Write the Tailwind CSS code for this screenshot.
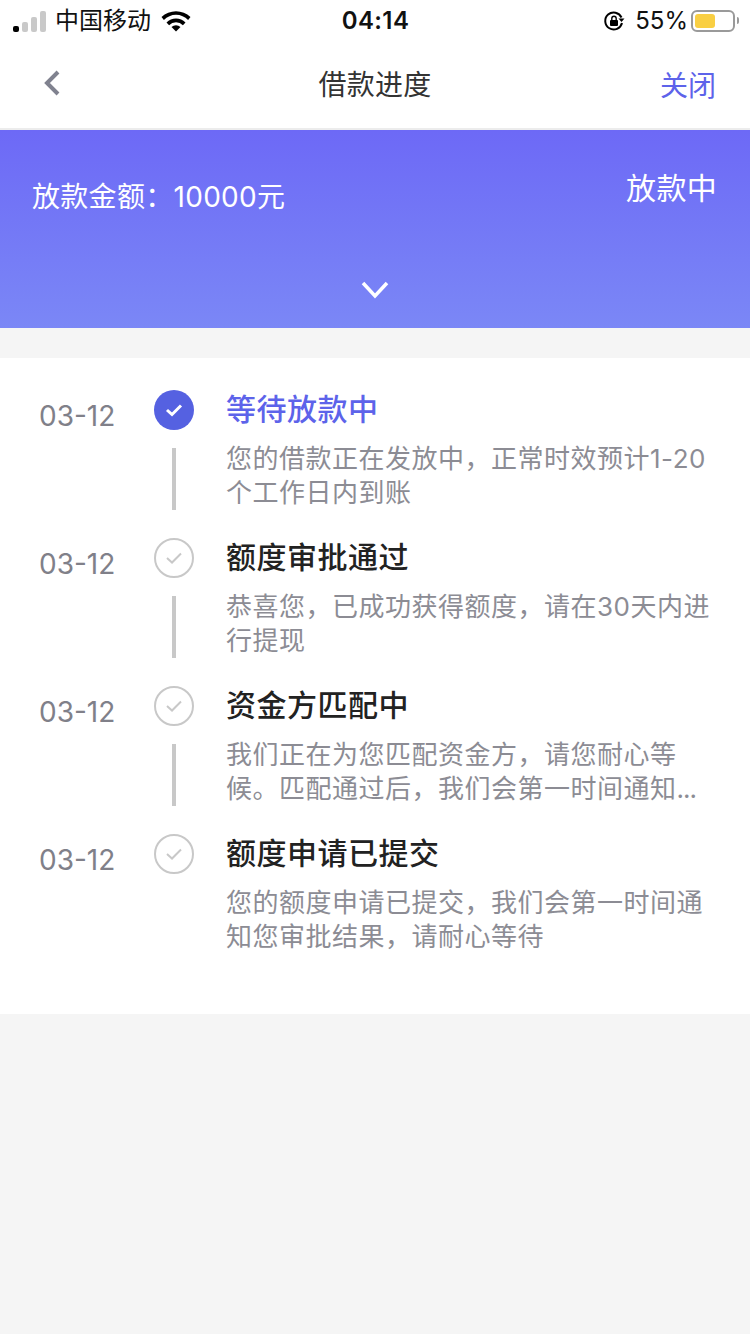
<!DOCTYPE html>
<html>
<head>
    <meta charset="utf-8">
    <title>借款进度</title>
    <script src="https://cdn.jsdelivr.net/npm/@tailwindcss/browser@4"></script>
</head>
<body class="w-[750px] h-[1334px] overflow-hidden bg-[#f5f5f5] font-['Inter','Noto_Sans_CJK_SC',sans-serif]">
    <!-- status bar -->
    <div class="h-[40px] pt-[1px] bg-white relative flex items-center pl-[13px] pr-[11px] text-[#111]">
        <div class="flex items-end gap-[3px] h-[22px] w-[33px]">
            <span class="w-[6px] h-[6px] rounded-[2px] bg-black"></span>
            <span class="w-[6px] h-[10px] rounded-[2px] bg-[#c9c9c9]"></span>
            <span class="w-[6px] h-[15px] rounded-[2px] bg-[#c9c9c9]"></span>
            <span class="w-[6px] h-[21px] rounded-[2px] bg-[#c9c9c9]"></span>
        </div>
        <span class="ml-[9px] text-[24px] leading-[40px]">中国移动</span>
        <svg class="ml-[10px]" width="30" height="22" viewBox="0 0 30 22">
            <path d="M0.500 7a21 21 0 0 1 29 0l-2.400 2.900a17 17 0 0 0-24.200 0z" fill="#000"/>
            <path d="M5.500 12.500a13.500 13.500 0 0 1 19 0l-2.600 2.800a9.500 9.500 0 0 0-13.800 0z" fill="#000"/>
            <path d="M10.500 17a6.500 6.500 0 0 1 9 0l-4.500 4.500z" fill="#000"/>
        </svg>
        <span class="absolute left-[1px] right-0 text-center text-[24px] font-semibold leading-[40px] tracking-[0.4px]">04:14</span>
        <div class="ml-auto flex items-center relative">
            <svg width="22" height="22" viewBox="0 0 22 22">
                <path d="M18.500 7.500A8.500 8.500 0 1 0 19 13" fill="none" stroke="#000" stroke-width="2"/>
                <path d="M15.500 8.500h6l-3 3.500z" fill="#000"/>
                <rect x="7" y="10" width="8" height="6" rx="1" fill="#000"/>
                <path d="M8.800 10V8.500a2.200 2.200 0 0 1 4.400 0V10" fill="none" stroke="#000" stroke-width="1.400"/>
            </svg>
            <span class="ml-[10px] text-[24px] leading-[40px]">55%</span>
            <div class="ml-[3px] w-[44px] h-[22px] rounded-[6px] border-2 border-[#9a9a9a] p-[2px]">
                <div class="w-[20px] h-full rounded-[3px] bg-[#f9cf43]"></div>
            </div>
            <span class="ml-[2px] w-[2px] h-[7px] rounded-r bg-[#9a9a9a]"></span>
        </div>
    </div>

    <!-- nav -->
    <div class="h-[88px] bg-white relative flex items-center justify-between pl-[43px] pr-[34px] border-b-2 border-[#ececec] box-content">
        <svg class="relative -top-[1px]" width="18" height="26" viewBox="0 0 18 26">
            <path d="M15 2 L4 13 L15 24" fill="none" stroke="#80828f" stroke-width="4"/>
        </svg>
        <span class="absolute left-0 right-0 top-[1px] text-center text-[28px] leading-[88px] tracking-[0.3px] text-[#333]">借款进度</span>
        <span class="text-[28px] leading-[88px] text-[#5d63ea] relative top-[2px]">关闭</span>
    </div>

    <!-- summary banner -->
    <div class="h-[198px] bg-gradient-to-b from-[#6d69f6] to-[#7b87f6] text-white relative px-[32px]">
        <div class="flex justify-between">
            <span class="text-[28px] leading-[40px] mt-[47px] font-normal tracking-[0.3px]">放款金额：10000元</span>
            <span class="text-[30px] leading-[40px] mt-[38px] font-normal tracking-[0.3px] pr-[1px]">放款中</span>
        </div>
        <svg class="absolute left-[361px] top-[151px]" width="28" height="18" viewBox="0 0 28 18">
            <path d="M2 2 L14 15 L26 2" fill="none" stroke="#fff" stroke-width="3.500"/>
        </svg>
    </div>

    <!-- timeline -->
    <div class="mt-[30px] bg-white h-[656px] pt-[32px] pl-[39px]">
        <div class="grid grid-cols-[115px_72px_1fr] h-[148px]">
            <span class="text-[28px] leading-[40px] mt-[6px] text-[#808089]">03-12</span>
            <div class="flex flex-col">
                <svg width="40" height="40" viewBox="0 0 40 40">
                    <circle cx="20" cy="20" r="20" fill="#5561e1"/>
                    <path d="M13 20 L18 24.500 L27 15.500" fill="none" stroke="#fff" stroke-width="3"/>
                </svg>
                <span class="ml-[18px] mt-[18px] w-[4px] h-[62px] bg-[#c8c8c8]"></span>
            </div>
            <div class="w-[490px]">
                <div class="text-[30px] leading-[40px] -mt-[1px] font-medium tracking-[0.5px] text-[#5d63ea]">等待放款中</div>
                <p class="mt-[13px] text-[26px] leading-[34px] tracking-[0.5px] text-[#8c8c94]">您的借款正在发放中，正常时效预计1-20个工作日内到账</p>
            </div>
        </div>
        <div class="grid grid-cols-[115px_72px_1fr] h-[148px]">
            <span class="text-[28px] leading-[40px] mt-[6px] text-[#808089]">03-12</span>
            <div class="flex flex-col">
                <svg width="40" height="40" viewBox="0 0 40 40">
                    <circle cx="20" cy="20" r="19" fill="none" stroke="#c8c8c8" stroke-width="2"/>
                    <path d="M13 20 L18 24.500 L27 15.500" fill="none" stroke="#c8c8c8" stroke-width="2"/>
                </svg>
                <span class="ml-[18px] mt-[18px] w-[4px] h-[62px] bg-[#c8c8c8]"></span>
            </div>
            <div class="w-[490px]">
                <div class="text-[30px] leading-[40px] -mt-[1px] font-medium tracking-[0.5px] text-[#222]">额度审批通过</div>
                <p class="mt-[13px] text-[26px] leading-[34px] tracking-[0.5px] text-[#8c8c94]">恭喜您，已成功获得额度，请在30天内进行提现</p>
            </div>
        </div>
        <div class="grid grid-cols-[115px_72px_1fr] h-[148px]">
            <span class="text-[28px] leading-[40px] mt-[6px] text-[#808089]">03-12</span>
            <div class="flex flex-col">
                <svg width="40" height="40" viewBox="0 0 40 40">
                    <circle cx="20" cy="20" r="19" fill="none" stroke="#c8c8c8" stroke-width="2"/>
                    <path d="M13 20 L18 24.500 L27 15.500" fill="none" stroke="#c8c8c8" stroke-width="2"/>
                </svg>
                <span class="ml-[18px] mt-[18px] w-[4px] h-[62px] bg-[#c8c8c8]"></span>
            </div>
            <div class="w-[490px]">
                <div class="text-[30px] leading-[40px] -mt-[1px] font-medium tracking-[0.5px] text-[#222]">资金方匹配中</div>
                <p class="mt-[13px] text-[26px] leading-[34px] tracking-[0.5px] text-[#8c8c94]">我们正在为您匹配资金方，请您耐心等候。匹配通过后，我们会第一时间通知<span class="tracking-[-1px]">...</span></p>
            </div>
        </div>
        <div class="grid grid-cols-[115px_72px_1fr] h-[148px]">
            <span class="text-[28px] leading-[40px] mt-[6px] text-[#808089]">03-12</span>
            <div class="flex flex-col">
                <svg width="40" height="40" viewBox="0 0 40 40">
                    <circle cx="20" cy="20" r="19" fill="none" stroke="#c8c8c8" stroke-width="2"/>
                    <path d="M13 20 L18 24.500 L27 15.500" fill="none" stroke="#c8c8c8" stroke-width="2"/>
                </svg>
            </div>
            <div class="w-[490px]">
                <div class="text-[30px] leading-[40px] -mt-[1px] font-medium tracking-[0.5px] text-[#222]">额度申请已提交</div>
                <p class="mt-[13px] text-[26px] leading-[34px] tracking-[0.5px] text-[#8c8c94]">您的额度申请已提交，我们会第一时间通知您审批结果，请耐心等待</p>
            </div>
        </div>
    </div>
</body>
</html>
